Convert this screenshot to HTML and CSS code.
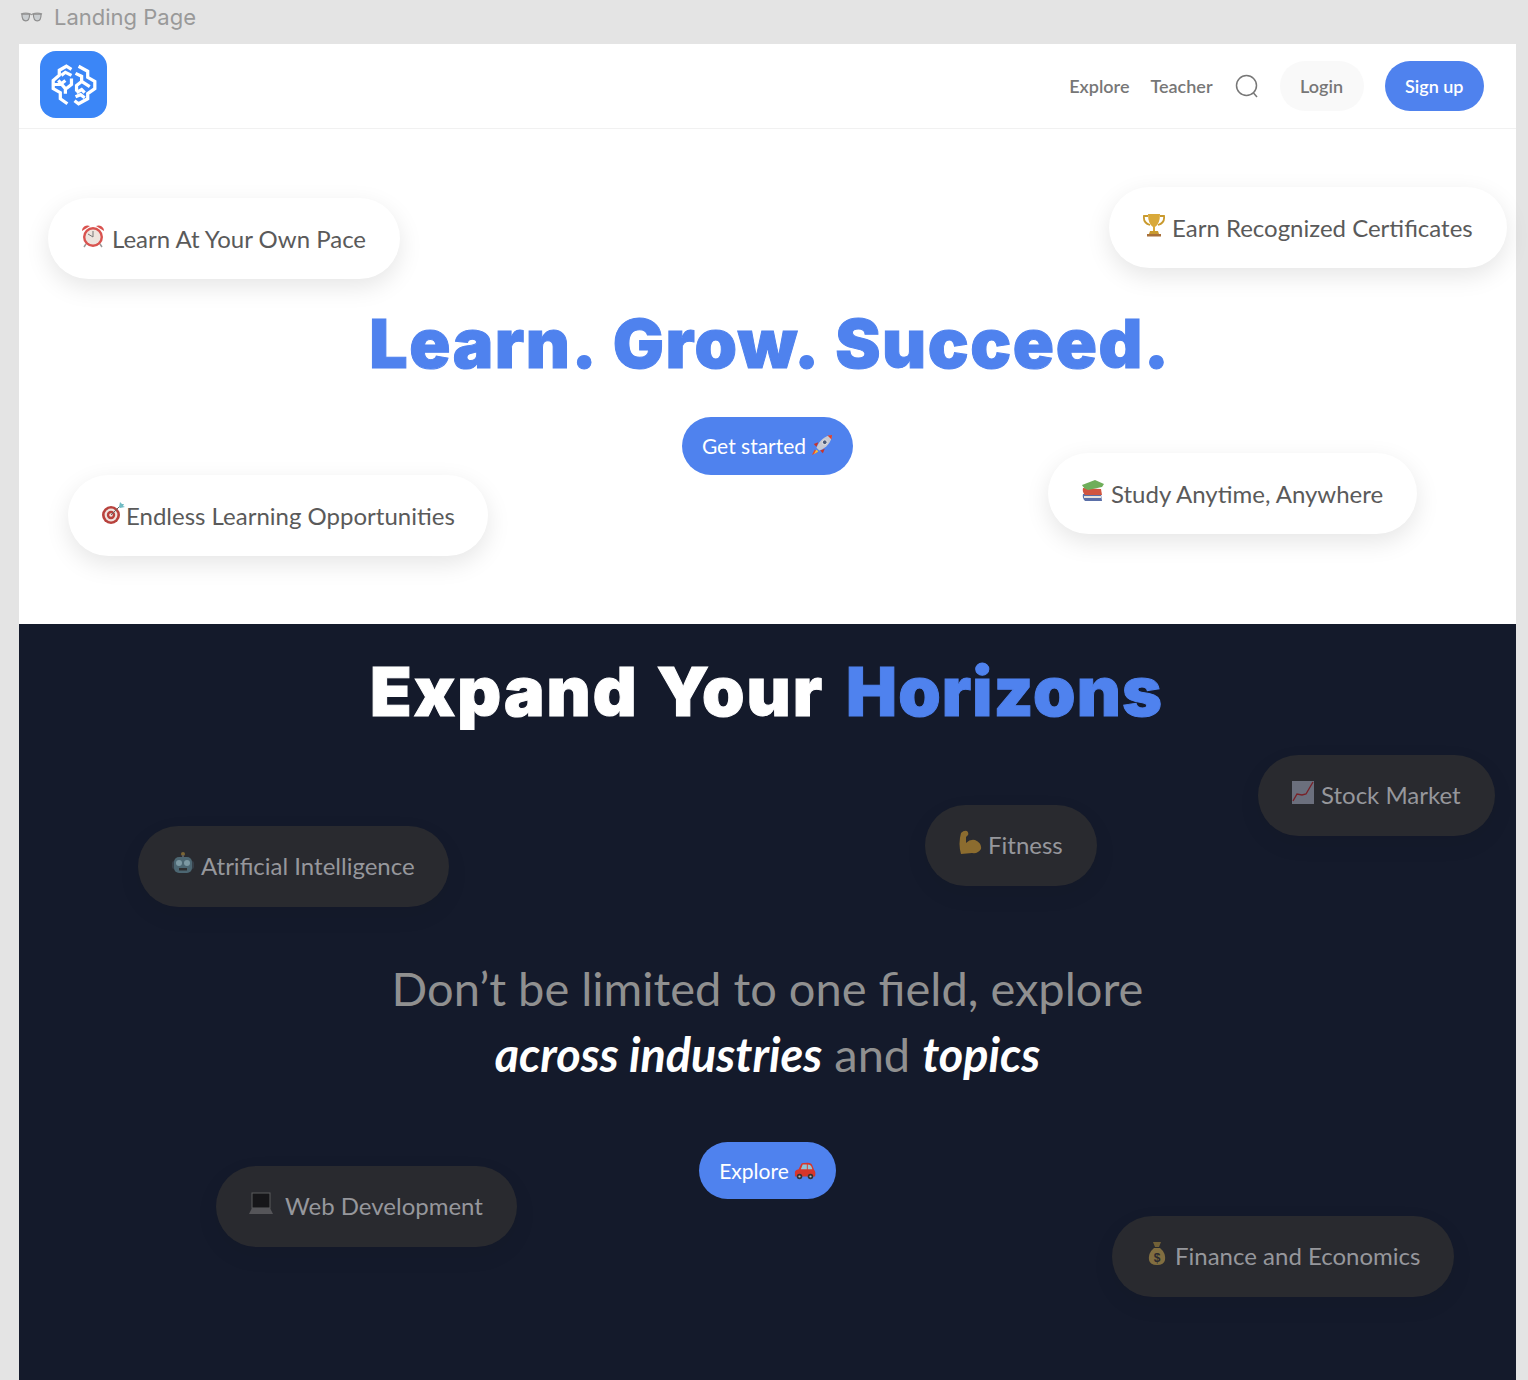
FILE: index.html
```html
<!DOCTYPE html>
<html lang="en">
  <head>
    <meta charset="UTF-8" />
    <meta name="viewport" content="width=device-width, initial-scale=1.0" />
    <title>Landing Page</title>
    <link rel="stylesheet" href="styles.css">
  </head>
  <body>
    <div class="frame-label">
      <svg class="glasses" viewBox="0 0 24 12">
        <path d="M1 3 Q6 1 11 3 Q12 4 13 3 Q18 1 23 3" fill="none" stroke="#9a9a9a" stroke-width="1.4" />
        <path d="M2 3 H10 Q10 10 6 10 Q2 10 2 3Z M14 3 H22 Q22 10 18 10 Q14 10 14 3Z" fill="#c9cdd0" stroke="#8d8d8d" stroke-width="1.2" />
      </svg>
      <span>Landing Page</span>
    </div>

    <div class="frame">
      <header class="topbar">
        <div class="logo">
          <svg viewBox="0 0 66 66" fill="none" stroke="#fff" stroke-width="3.2" stroke-linejoin="miter">
            <path d="M31 18 L26 15 L19 19 V24 L13 29 V37 L20 41 V47 L27 52" />
            <path d="M31 24 L25 21 L21 24 M13 33 H20 L25 29 M18 29 L25 37 V42 M26 37 L31 33 V27" />
            <path d="M38 15 L47 20 V26 L54 30 V37 L47 42 V47 L38 52 L34 49" />
            <path d="M35 22 L41 25 V30 L36 34 V40 M41 30 L49 35 M36 41 L41 38 L44 41 M35 45 L40 43 L44 46" />
          </svg>
        </div>
        <nav class="nav">
          <a class="nav-link">Explore</a>
          <a class="nav-link">Teacher</a>
          <svg class="search" viewBox="0 0 24 24" fill="none" stroke="#777" stroke-width="1.5">
            <circle cx="11.5" cy="11.5" r="10" />
            <path d="M18.5 19 L22 23" />
          </svg>
          <a class="btn-login">Login</a>
          <a class="btn-signup">Sign up</a>
        </nav>
      </header>

      <section class="hero">
        <h1 class="hero-title">Learn. Grow. Succeed.</h1>
        <a class="cta cta-start">Get started
          <svg class="emoji-small" viewBox="0 0 24 24">
            <path d="M4 17 L1 23 L7 20Z" fill="#e8482c" />
            <path d="M6 17 L3 22 L8 19Z" fill="#f5c33b" />
            <path d="M8 9 L3 11 L6 14Z M15 16 L13 21 L10 18Z" fill="#c9342a" />
            <path d="M6 15 C9 7 15 2 23 1 C22 9 17 15 9 18Z" fill="#c7c9d2" />
            <path d="M18 1.6 L23 1 L22.4 6Z" fill="#d8412f" />
            <circle cx="15" cy="9" r="2.6" fill="#4a5a78" stroke="#eee" stroke-width="1" />
          </svg>
        </a>

        <div class="pill pill-pace">
          <svg class="emoji" viewBox="0 0 24 24">
            <path d="M1 7 A5.5 5.5 0 0 1 9 2Z M23 7 A5.5 5.5 0 0 0 15 2Z" fill="#d9534f" />
            <path d="M5 20 L3 23 M19 20 L21 23" stroke="#999" stroke-width="1.5" />
            <circle cx="12" cy="13" r="10" fill="#d9534f" />
            <circle cx="12" cy="13" r="7.6" fill="#eee4de" />
            <path d="M12 13 V7 M12 13 L7 10" stroke="#777" stroke-width="1" />
          </svg>
          <span>Learn At Your Own Pace</span>
        </div>

        <div class="pill pill-certs">
          <svg class="emoji" viewBox="0 0 24 24">
            <path d="M6 3 H2 Q1 10 8 12 M18 3 H22 Q23 10 16 12" fill="none" stroke="#c99a2e" stroke-width="1.8" />
            <path d="M6 1 H18 Q18 11 13 14 V18 H11 V14 Q6 11 6 1Z" fill="#d9a93a" />
            <path d="M8 18 H16 L17 21 H7Z" fill="#c99a2e" />
            <rect x="5" y="21" width="14" height="2.5" fill="#a8703a" />
          </svg>
          <span>Earn Recognized Certificates</span>
        </div>

        <div class="pill pill-endless">
          <svg class="emoji" viewBox="0 0 24 24">
            <circle cx="10" cy="14" r="9" fill="#b8423d" />
            <circle cx="10" cy="14" r="6.4" fill="#efe3df" />
            <circle cx="10" cy="14" r="4.2" fill="#b8423d" />
            <circle cx="10" cy="14" r="1.8" fill="#efe3df" />
            <path d="M10 14 L20 4" stroke="#666" stroke-width="1" />
            <path d="M18 6 L19 1 L21 3 L23 3 L22 5 L24 6 L19 7Z" fill="#72bcc4" />
          </svg>
          <span>Endless Learning Opportunities</span>
        </div>

        <div class="pill pill-study">
          <svg class="emoji" viewBox="0 0 24 24">
            <path d="M2 15 L20 15 L21 22 H4 Q1 19 2 15Z" fill="#5a6fa8" />
            <path d="M3 17 H20 V19 H3Z" fill="#e8e4dc" />
            <path d="M2 9 L20 10 L21 16 H4 Q1 13 2 9Z" fill="#d0553f" />
            <path d="M1 6 L14 1 L23 5 L21 8 L7 11 Q3 10 1 6Z" fill="#6fae5a" />
          </svg>
          <span>Study Anytime, Anywhere</span>
        </div>
      </section>

      <section class="topics">
        <h2 class="topics-title">Expand Your <span class="accent">Horizons</span></h2>
        <p class="topics-text">Don’t be limited to one field, explore<br><em>across industries</em> and <em>topics</em></p>
        <a class="cta cta-explore">Explore
          <svg class="emoji-small" viewBox="0 0 24 24">
            <path d="M1 18 V13 Q1 11 5 10 L8 4 Q9 3 15 3 Q19 3 20 6 L22 11 Q24 13 23 18Z" fill="#d8362b" />
            <path d="M9.5 5 H14 V10 H7.5Z M15 5 Q18 5 19 7 L20 10 H15Z" fill="#8fc4d8" />
            <circle cx="6" cy="18" r="3" fill="#333" />
            <circle cx="18" cy="18" r="3" fill="#333" />
            <circle cx="6" cy="18" r="1.2" fill="#bbb" />
            <circle cx="18" cy="18" r="1.2" fill="#bbb" />
          </svg>
        </a>

        <div class="pill pill-dark pill-ai">
          <svg class="emoji" viewBox="0 0 24 24">
            <circle cx="12" cy="3" r="2" fill="#a8863a" />
            <rect x="11" y="4" width="2" height="4" fill="#777" />
            <rect x="1" y="10" width="22" height="8" rx="2" fill="#3d4a55" />
            <rect x="3" y="6" width="18" height="16" rx="5" fill="#5f8796" />
            <circle cx="8" cy="12" r="3" fill="#a9d3e0" />
            <circle cx="16" cy="12" r="3" fill="#a9d3e0" />
            <rect x="8" y="17" width="8" height="2.5" fill="#333" />
          </svg>
          <span>Atrificial Intelligence</span>
        </div>

        <div class="pill pill-dark pill-fitness">
          <svg class="emoji" viewBox="0 0 24 24">
            <path d="M3 24 Q0 14 3 3 Q6 0 9 1 Q11 3 10 5 L8 7 L8 13 Q12 9 17 10 Q24 13 23 19 Q20 24 14 23Z" fill="#c2902f" />
          </svg>
          <span>Fitness</span>
        </div>

        <div class="pill pill-dark pill-stock">
          <svg class="emoji" viewBox="0 0 24 24">
            <rect x="1" y="1" width="22" height="23" fill="#8f94a8" />
            <path d="M2 21 L6 14 L11 15 L15 14 L22 2" fill="none" stroke="#a31d24" stroke-width="1.4" />
          </svg>
          <span>Stock Market</span>
        </div>

        <div class="pill pill-dark pill-web">
          <svg class="emoji" viewBox="0 0 24 24">
            <rect x="3" y="2" width="18" height="15" fill="#0c0c0e" stroke="#777" stroke-width="1" />
            <path d="M3 17 H21 L24 23 H0Z" fill="#6d6d70" />
          </svg>
          <span>Web Development</span>
        </div>

        <div class="pill pill-dark pill-finance">
          <svg class="emoji emoji-bag" viewBox="0 0 18 24">
            <path d="M5 1 L13 1 L11 6 H7Z" fill="#9a7f3c" />
            <path d="M6 7 H12 Q18 12 17 19 Q16 24 9 24 Q2 24 1 19 Q0 12 6 7Z" fill="#b0934a" />
            <text x="9" y="21" class="bag-sign">$</text>
          </svg>
          <span>Finance and Economics</span>
        </div>
      </section>
    </div>
  </body>
</html>
```

FILE: styles.css
```css
* {
  box-sizing: border-box;
}

html,
body {
  height: 1380px;
  overflow: hidden;
}

body {
  margin: 0;
  background-color: #e4e4e4;
  font-family: "Lato", "Liberation Sans", sans-serif;
}

.frame-label {
  display: flex;
  align-items: center;
  gap: 11px;
  height: 44px;
  padding: 0 0 11px 20px;
  font-family: "Inter", "Liberation Sans", sans-serif;
  font-size: 22px;
  color: #999;
}

.glasses {
  width: 23px;
  height: 12px;
}

.frame {
  width: 1497px;
  margin-left: 19px;
  background-color: #fff;
}

/* top bar */
.topbar {
  display: flex;
  align-items: center;
  justify-content: space-between;
  height: 85px;
  padding: 0 32px 3px 21px;
  border-bottom: 1px solid #f1f1f1;
}

.logo {
  width: 67px;
  height: 67px;
  border-radius: 16px;
  background-color: #3b86f7;
}

.logo svg {
  display: block;
  width: 100%;
  height: 100%;
}

.nav {
  display: flex;
  align-items: center;
  margin-top: 3px;
}

.nav-link {
  margin-right: 21px;
  font-size: 18px;
  font-weight: 600;
  color: #777;
}

.search {
  width: 24px;
  height: 24px;
  margin: 0 21px 0 1px;
}

.btn-login,
.btn-signup {
  display: flex;
  align-items: center;
  height: 50px;
  padding: 0 20.5px;
  border-radius: 25px;
  font-size: 18px;
  font-weight: 600;
}

.btn-login {
  margin-right: 21px;
  background-color: #f9f9f9;
  color: #777;
}

.btn-signup {
  background-color: #4f82ee;
  color: #fff;
}

/* hero */
.hero {
  position: relative;
  display: flex;
  flex-direction: column;
  align-items: center;
  height: 495px;
  padding-top: 171px;
}

.hero-title,
.topics-title {
  margin: 0;
  font-family: "Inter", "Liberation Sans", sans-serif;
  font-size: 68px;
  font-weight: 900;
  line-height: 86px;
  -webkit-text-stroke: 1px currentColor;
  white-space: nowrap;
}

.hero-title {
  padding-left: 5px;
  letter-spacing: 1.55px;
  word-spacing: 3px;
  color: #4f82ee;
}

.cta {
  display: flex;
  align-items: center;
  gap: 5px;
  height: 58px;
  padding: 0 20px 2px;
  border-radius: 29px;
  background-color: #4f82ee;
  color: #fff;
  font-size: 21px;
}

.cta-start {
  margin-top: 31px;
}

.emoji-small {
  width: 22px;
  height: 22px;
}

/* floating pills */
.pill {
  position: absolute;
  display: flex;
  align-items: center;
  gap: 6px;
  height: 81px;
  padding: 0 34px 0 33px;
  border-radius: 41px;
  background-color: #fff;
  box-shadow: 0 8px 24px rgba(0, 0, 0, 0.1);
  color: #5a5a5a;
  font-size: 24px;
  white-space: nowrap;
}

.emoji {
  width: 24px;
  height: 24px;
  margin-top: -6px;
}

.pill-pace {
  left: 29px;
  top: 69px;
  gap: 7px;
}

.pill-certs {
  left: 1090px;
  top: 58px;
}

.pill-endless {
  left: 49px;
  top: 346px;
  padding-right: 33px;
  gap: 1px;
}

.pill-study {
  left: 1029px;
  top: 324px;
}

/* dark section */
.topics {
  position: relative;
  display: flex;
  flex-direction: column;
  align-items: center;
  height: 756px;
  padding-top: 24px;
  background-color: #141a2b;
}

.topics-title {
  padding-right: 2px;
  letter-spacing: 2.1px;
  word-spacing: 2px;
  color: #fff;
}

.accent {
  margin-left: 4px;
  letter-spacing: 1.1px;
  color: #4f82ee;
}

.topics-text {
  margin: 221px 0 0;
  color: #909090;
  font-size: 47px;
  line-height: 66px;
  text-align: center;
}

.topics-text em {
  color: #fff;
  font-size: 46.8px;
  font-weight: 700;
}

.cta-explore {
  margin-top: 55px;
  height: 57px;
  padding-bottom: 0;
}

.pill-dark {
  padding-bottom: 2px;
  background-color: #292a2f;
  box-shadow: 0 8px 24px rgba(0, 0, 0, 0.06);
  color: #96979c;
}

.pill-dark .emoji {
  opacity: 0.65;
}

.pill-ai {
  left: 119px;
  top: 202px;
  padding-right: 34px;
}

.pill-fitness {
  left: 906px;
  top: 181px;
}

.pill-stock {
  left: 1239px;
  top: 131px;
}

.pill-web {
  left: 197px;
  top: 542px;
  gap: 12px;
}

.pill-finance {
  left: 1093px;
  top: 592px;
  padding-left: 36px;
  gap: 9px;
}

.emoji-bag {
  width: 18px;
}

.bag-sign {
  font-family: "Liberation Sans", sans-serif;
  font-size: 12px;
  font-weight: 700;
  text-anchor: middle;
  fill: #2a2a30;
}
```
